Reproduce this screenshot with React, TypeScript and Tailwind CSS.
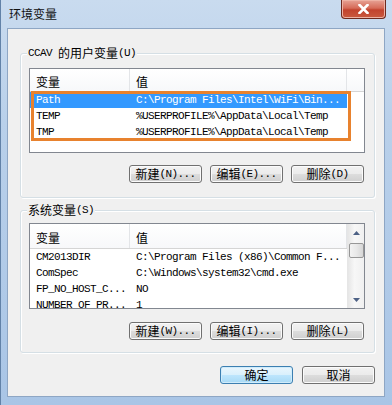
import React from "react";

const CJK = "font-['Noto_Sans_CJK_SC',sans-serif]";
const MONO = "font-['Liberation_Mono','Noto_Sans_CJK_SC',monospace]";

function Btn({ zh, key2, def }: { zh: string; key2?: string; def?: boolean }) {
  return (
    <div
      className={
        "h-[18px] w-[73px] rounded-[3px] border flex items-center justify-center text-[12px] leading-[14px] text-black " +
        (def
          ? "border-[#3c7fb1] bg-[linear-gradient(to_bottom,#eaf6fd_0%,#d9f0fc_50%,#bee6fd_50%,#a7d9f5_100%)] shadow-[inset_0_0_0_1px_#d0ecfb]"
          : "border-[#707070] bg-[linear-gradient(to_bottom,#f2f2f2_0%,#ebebeb_50%,#dddddd_50%,#cfcfcf_100%)] shadow-[inset_0_0_0_1px_#fbfbfb]")
      }
    >
      <span className={CJK}>{zh}</span>
      {key2 && <span className={MONO + " text-[11px] tracking-[-0.6px]"}>{key2}</span>}
    </div>
  );
}

function Header({ scroll, tall }: { scroll?: boolean; tall?: boolean }) {
  return (
    <div className={(tall ? "h-[25px]" : "h-[23px]") + " flex border-b border-[#d5d5d5] bg-[linear-gradient(to_bottom,#ffffff,#f7f8fa)] shrink-0"}>
      <div className={"w-[100px] border-r border-[#e3e5e8] pl-[6px] pt-[3px] flex items-center text-[12px] " + CJK}>变量</div>
      <div className={"w-[217px] border-r border-[#e3e5e8] pl-[6px] pt-[3px] flex items-center text-[12px] " + CJK}>值</div>
      {!scroll && <div className="flex-1" />}
    </div>
  );
}

function Row({ a, b, sel }: { a: string; b: string; sel?: boolean }) {
  return (
    <div
      className={
        "h-[16px] w-[317px] shrink-0 flex items-center text-[11px] tracking-[-0.6px] whitespace-nowrap " +
        MONO +
        (sel ? " bg-[#3399ff] text-white" : " text-black")
      }
    >
      <div className="w-[100px] pl-[6px] overflow-hidden">{a}</div>
      <div className="w-[217px] pl-[6px] overflow-hidden">{b}</div>
    </div>
  );
}

function Group({ pre, label, labelKey, children, h }: { pre?: string; label: string; labelKey: string; children: React.ReactNode; h: string }) {
  return (
    <div className={"relative ml-[12px] w-[355px] border border-[#d5dfe5] rounded-[3px] shadow-[inset_1px_1px_0_#ffffff,1px_1px_0_#ffffff] " + h}>
      <div className="absolute -top-[9px] left-[6px] bg-[#f0f0f0] px-[1px] flex items-center text-[12px] leading-[16px] text-black whitespace-pre">
        {pre && <span className={MONO + " text-[11px] tracking-[-0.6px]"}>{pre}</span>}
        {label}
        <span className={MONO + " text-[11px] tracking-[-0.6px]"}>{labelKey}</span>
      </div>
      {children}
    </div>
  );
}

export default function App() {
  return (
    <div className="w-[392px] h-[405px] overflow-hidden border-l border-[#6282a8] bg-[linear-gradient(to_bottom,#c9dbef_0%,#b9d0ea_30%,#a9c5e6_100%)] flex flex-col">
      <div className="h-[28px] shrink-0 flex items-start">
        <div className={"pl-[8px] pt-[6px] text-[12px] leading-[16px] text-[#111] " + CJK}>环境变量</div>
        <div className="ml-auto mr-[6px] w-[45px] h-[19px] rounded-b-[4px] border border-t-0 border-[#6e2a1f] bg-[linear-gradient(to_bottom,#e7a396_0%,#d66b58_45%,#c2432e_55%,#c95a3f_100%)] shadow-[inset_0_0_0_1px_#eeb2a4] flex items-center justify-center">
          <svg width="11" height="10" viewBox="0 0 11 10">
            <path d="M1.5 1 L9.5 9 M9.5 1 L1.5 9" stroke="#ffffff" strokeWidth="2.6" strokeLinecap="square" />
          </svg>
        </div>
      </div>

      <div className={"ml-[6px] w-[378px] h-[369px] bg-[#f0f0f0] border border-[#8ea6c4] flex flex-col " + CJK}>
        <div className="h-[24px] shrink-0" />
        <Group pre="CCAV " label="的用户变量" labelKey="(U)" h="h-[145px]">
          <div className="ml-[8px] mt-[14px] w-[336px] h-[85px] border border-[#828790] bg-white relative overflow-hidden flex flex-col">
            <Header />
            <Row a="Path" b="C:\Program Files\Intel\WiFi\Bin..." sel />
            <Row a="TEMP" b="%USERPROFILE%\AppData\Local\Temp" />
            <Row a="TMP" b="%USERPROFILE%\AppData\Local\Temp" />
            <div className="absolute left-[1px] top-[22px] w-[320px] h-[50px] border-[3px] border-[#e8822e]" />
          </div>
          <div className="mt-[12px] flex justify-end gap-[8px] pr-[10px]">
            <Btn zh="新建" key2="(N)..." />
            <Btn zh="编辑" key2="(E)..." />
            <Btn zh="删除" key2="(D)" />
          </div>
        </Group>

        <div className="h-[12px] shrink-0" />
        <Group label="系统变量" labelKey="(S)" h="h-[143px]">
          <div className="ml-[8px] mt-[12px] w-[336px] h-[86px] border border-[#828790] bg-white overflow-hidden flex">
            <div className="flex flex-col w-[317px]">
              <Header scroll tall />
              <Row a="CM2013DIR" b="C:\Program Files (x86)\Common F..." />
              <Row a="ComSpec" b="C:\Windows\system32\cmd.exe" />
              <Row a="FP_NO_HOST_C..." b="NO" />
              <Row a="NUMBER_OF_PR..." b="1" />
            </div>
            <div className="w-[17px] h-full flex flex-col items-center bg-[linear-gradient(to_right,#e6e6e6,#f7f7f7_40%,#f0f0f0)] border-l border-[#e6e6e6]">
              <div className="h-[17px] w-full flex items-center justify-center">
                <svg width="7" height="4" viewBox="0 0 7 4"><path d="M3.5 0 L7 4 L0 4 Z" fill="#4d6185" /></svg>
              </div>
              <div className="w-[15px] h-[15px] mt-[2px] rounded-[2px] border border-[#979797] bg-[linear-gradient(to_right,#f3f3f3,#e8e8e8_50%,#d6d6d6)]" />
              <div className="flex-1" />
              <div className="h-[17px] w-full flex items-center justify-center">
                <svg width="7" height="4" viewBox="0 0 7 4"><path d="M0 0 L7 0 L3.5 4 Z" fill="#4d6185" /></svg>
              </div>
            </div>
          </div>
          <div className="mt-[13px] flex justify-end gap-[8px] pr-[10px]">
            <Btn zh="新建" key2="(W)..." />
            <Btn zh="编辑" key2="(I)..." />
            <Btn zh="删除" key2="(L)" />
          </div>
        </Group>

        <div className="mt-[13px] flex justify-end gap-[9px] pr-[9px]">
          <Btn zh="确定" def />
          <Btn zh="取消" />
        </div>
      </div>
    </div>
  );
}
